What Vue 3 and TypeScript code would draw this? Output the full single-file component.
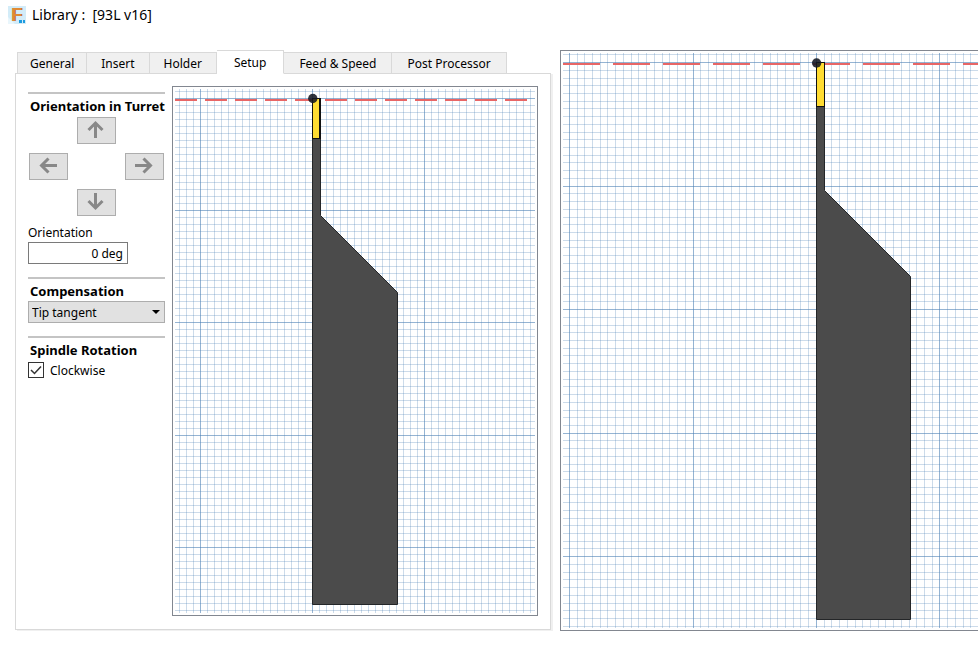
<script setup lang="ts">
import { ref } from 'vue'

interface Line {
  pos: number
  major: boolean
}

interface Drawing {
  name: string
  height: number
  vertical: Line[]
  horizontal: Line[]
  axisY: number
  dash: string
  holder: string
  insert: { x: number; y: number; width: number; height: number; edge: number }
  tip: { x: number; y: number }
}

interface Scale {
  origin: number
  step: number
}

const PER_MAJOR = 16

/* Minor lines sit between the major ones, which keep their own spacing. */
function gridLines(minor: Scale, major: Scale, from: number, to: number): Line[] {
  const lines: Line[] = []
  for (let i = from; i <= to; i++) {
    const isMajor = i % PER_MAJOR === 0
    const at = isMajor
      ? major.origin + (i / PER_MAJOR) * major.step
      : minor.origin + i * minor.step
    lines.push({ pos: Math.floor(at), major: isMajor })
  }
  return lines
}

const setupDrawing: Drawing = {
  name: 'Tool setup preview',
  height: 524,
  vertical: gridLines({ origin: 25.22, step: 7.02 }, { origin: 25.22, step: 112.2 }, -3, 47),
  horizontal: gridLines({ origin: 9.2, step: 7.02 }, { origin: 9.2, step: 112.3 }, -1, 73),
  axisY: 11,
  dash: '22 8',
  holder: 'M137.5 9.5H145.5V126.5L222.5 203.5V515.5H137.5Z',
  insert: { x: 137, y: 9, width: 9, height: 41, edge: 2 },
  tip: { x: 137.8, y: 9.5 },
}

const fullDrawing: Drawing = {
  name: 'Tool preview',
  height: 575,
  vertical: gridLines({ origin: 6.39, step: 7.72 }, { origin: 6.65, step: 123.4 }, 0, 240),
  horizontal: gridLines({ origin: 9.6, step: 7.72 }, { origin: 9.6, step: 123.52 }, -1, 73),
  axisY: 11,
  dash: '37 13',
  holder: 'M253.5 9.5H261.5V137.5L347.5 223.5V566.5H253.5Z',
  insert: { x: 253, y: 9, width: 9, height: 45, edge: 1 },
  tip: { x: 253.6, y: 10 },
}

const tabs = ['General', 'Insert', 'Holder', 'Setup', 'Feed & Speed', 'Post Processor']
const activeTab = ref('Setup')

const directions = [
  { name: 'up', path: 'M8.5 17V2M1.5 9L8.5 2L15.5 9' },
  { name: 'left', path: 'M18 8.5H3M9.5 1.5L2.5 8.5L9.5 15.5' },
  { name: 'right', path: 'M0 8.5H15M8.5 1.5L15.5 8.5L8.5 15.5' },
  { name: 'down', path: 'M8.5 0V15M1.5 8L8.5 15L15.5 8' },
]

const orientation = ref('0 deg')
const compensation = ref('Tip tangent')
const compensations = ['Tip tangent', 'Tip', 'Center']
const clockwise = ref(true)
</script>

<template>
  <div class="window">
    <header class="titlebar">
      <svg class="logo" width="18" height="18" viewBox="0 0 18 18" aria-hidden="true">
        <rect width="18" height="18" fill="#d3ecf8" />
        <path d="M0 18V11L7 18Z" fill="#e9f6fc" />
        <text class="logo-shade" x="4" y="15">F</text>
        <text class="logo-letter" x="3" y="15">F</text>
        <rect x="11" y="14" width="3" height="3" fill="#1c9be0" />
        <rect x="15" y="14" width="2" height="3" fill="#1c9be0" />
      </svg>
      <h1 class="title">Library :&nbsp; [93L v16]</h1>
    </header>

    <main class="content">
      <div class="editor">
        <div class="tabs" role="tablist">
          <button
            v-for="tab in tabs"
            :key="tab"
            type="button"
            role="tab"
            class="tab"
            :class="{ active: tab === activeTab, long: tab.includes(' ') }"
            :aria-selected="tab === activeTab"
            @click="activeTab = tab"
          >{{ tab }}</button>
        </div>

        <div class="panel" role="tabpanel">
          <form class="settings" @submit.prevent>
            <section class="group">
              <h2 class="heading">Orientation in Turret</h2>
              <div class="pad">
                <button
                  v-for="d in directions"
                  :key="d.name"
                  type="button"
                  class="arrow"
                  :class="d.name"
                  :aria-label="d.name"
                >
                  <svg class="arrow-icon" width="17" height="17" viewBox="0 0 17 17" aria-hidden="true">
                    <path :d="d.path" fill="none" stroke="#888" stroke-width="3" />
                  </svg>
                </button>
              </div>
              <label class="label" for="orientation">Orientation</label>
              <input id="orientation" v-model="orientation" class="field" type="text" />
            </section>

            <section class="group">
              <h2 id="compensation-heading" class="heading">Compensation</h2>
              <div class="select-wrap">
                <select v-model="compensation" class="select" aria-labelledby="compensation-heading">
                  <option v-for="c in compensations" :key="c">{{ c }}</option>
                </select>
                <svg class="caret" width="8" height="4" viewBox="0 0 8 4" aria-hidden="true">
                  <path d="M0 0H8L4 4Z" />
                </svg>
              </div>
            </section>

            <section class="group">
              <h2 class="heading">Spindle Rotation</h2>
              <label class="check">
                <input v-model="clockwise" class="box" type="checkbox" />
                <svg v-if="clockwise" class="tick" width="16" height="16" viewBox="0 0 16 16" aria-hidden="true">
                  <path d="M3 8L6.5 11.5L13 4.5" fill="none" stroke="#333" stroke-width="1.5" />
                </svg>
                <span class="check-text">Clockwise</span>
              </label>
            </section>
          </form>

          <figure v-for="g in [setupDrawing]" :key="g.name" class="frame">
            <svg class="drawing" :height="g.height" role="img" :aria-label="g.name">
              <rect v-for="l in g.vertical" :key="'v' + l.pos" :x="l.pos" y="0" width="1" height="100%" class="line" :class="{ major: l.major }" />
              <rect v-for="l in g.horizontal" :key="'h' + l.pos" x="0" :y="l.pos" width="100%" height="1" class="line" :class="{ major: l.major }" />
              <line class="axis" x1="0" :y1="g.axisY" x2="100%" :y2="g.axisY" :stroke-dasharray="g.dash" />
              <path class="holder" :d="g.holder" />
              <rect class="insert-edge" :x="g.insert.x" :y="g.insert.y" :width="g.insert.width" :height="g.insert.height" />
              <rect class="insert" :x="g.insert.x + 1" :y="g.insert.y + 1" :width="g.insert.width - 1 - g.insert.edge" :height="g.insert.height - 2" />
              <circle class="tip" :cx="g.tip.x" :cy="g.tip.y" r="4.7" />
            </svg>
          </figure>
        </div>
      </div>

      <figure v-for="g in [fullDrawing]" :key="g.name" class="frame wide">
        <svg class="drawing" :height="g.height" role="img" :aria-label="g.name">
          <rect v-for="l in g.vertical" :key="'v' + l.pos" :x="l.pos" y="0" width="1" height="100%" class="line" :class="{ major: l.major }" />
          <rect v-for="l in g.horizontal" :key="'h' + l.pos" x="0" :y="l.pos" width="100%" height="1" class="line" :class="{ major: l.major }" />
          <line class="axis" x1="0" :y1="g.axisY" x2="100%" :y2="g.axisY" :stroke-dasharray="g.dash" />
          <path class="holder" :d="g.holder" />
          <rect class="insert-edge" :x="g.insert.x" :y="g.insert.y" :width="g.insert.width" :height="g.insert.height" />
          <rect class="insert" :x="g.insert.x + 1" :y="g.insert.y + 1" :width="g.insert.width - 1 - g.insert.edge" :height="g.insert.height - 2" />
          <circle class="tip" :cx="g.tip.x" :cy="g.tip.y" r="4.7" />
        </svg>
      </figure>
    </main>
  </div>
</template>

<style>
body {
  margin: 0;
  background: #fff;
}
</style>

<style scoped>
.window {
  display: flex;
  flex-direction: column;
  gap: 20px;
  min-height: 100vh;
  box-sizing: border-box;
  overflow: hidden;
  color: #000;
  font: 12px/18px "Noto Sans", "Open Sans", sans-serif;
}

.titlebar {
  display: flex;
  align-items: center;
  gap: 6px;
  height: 30px;
  padding-left: 8px;
  box-sizing: border-box;
}

.logo {
  flex: none;
}

.logo-letter,
.logo-shade {
  font: bold 18px "Liberation Sans", sans-serif;
  fill: #e08a35;
}

.logo-shade {
  fill: #a8642a;
}

.title {
  margin: 0;
  font-size: 14px;
  font-weight: 400;
}

.content {
  display: flex;
  align-items: flex-start;
  gap: 9px;
  padding-left: 15px;
}

.editor {
  flex: none;
}

.tabs {
  display: flex;
  align-items: flex-end;
  height: 24px;
  margin-bottom: -1px;
  padding-left: 2px;
}

.tab {
  height: 22px;
  padding: 2px 14px 0;
  border: 1px solid #d9d9d9;
  border-left-width: 0;
  background: #f0f0f0;
  color: inherit;
  font: inherit;
}

.tab.long {
  padding: 2px 15px 0;
}

.tab:first-child {
  padding: 2px 12px 0;
  border-left-width: 1px;
}

.tab.active {
  position: relative;
  height: 24px;
  padding: 2px 17px 0;
  border-bottom-color: #fff;
  background: #fff;
}

.panel {
  display: flex;
  align-items: flex-start;
  gap: 7px;
  padding: 12px 12px 13px;
  border: 1px solid #d9d9d9;
  box-shadow: 2px 1px 0 #f0f0f0;
}

.settings {
  display: flex;
  flex-direction: column;
  gap: 13px;
  width: 137px;
  padding-top: 6px;
}

.group {
  display: flex;
  flex-direction: column;
  border-top: 2px solid #c4c4c4;
}

.heading {
  margin: 0;
  padding: 3px 0 1px 2px;
  font-size: 13px;
  font-weight: 700;
  white-space: nowrap;
}

.pad {
  display: grid;
  grid-template: repeat(3, 27px) / repeat(3, 39px);
  grid-template-areas: ". up ." "left . right" ". down .";
  gap: 9px;
  padding: 1px 1px 8px;
}

.arrow {
  display: grid;
  place-items: center;
  padding: 0 2px 2px 0;
  border: 1px solid #adadad;
  background: #e1e1e1;
}

.arrow-icon {
  overflow: visible;
}

.up {
  grid-area: up;
}

.left {
  grid-area: left;
}

.right {
  grid-area: right;
}

.down {
  grid-area: down;
}

.field {
  width: 100px;
  height: 22px;
  padding: 0 4px;
  box-sizing: border-box;
  border: 1px solid #7a7a7a;
  background: #fff;
  color: inherit;
  font: inherit;
  text-align: right;
}

.select-wrap {
  position: relative;
  display: flex;
}

.select {
  flex: 1;
  height: 22px;
  padding: 2px 20px 0 3px;
  appearance: none;
  border: 1px solid #adadad;
  border-radius: 0;
  background: #e1e1e1;
  color: inherit;
  font: inherit;
}

.caret {
  position: absolute;
  top: 9px;
  right: 5px;
  pointer-events: none;
}

.check {
  position: relative;
  display: flex;
  align-items: center;
  gap: 6px;
  height: 18px;
  margin-top: 1px;
}

.check-text {
  padding-top: 1px;
}

.box {
  width: 16px;
  height: 16px;
  margin: 0;
  appearance: none;
  border: 1px solid #333;
  background: #fff;
}

.tick {
  position: absolute;
  top: 1px;
  left: 0;
  pointer-events: none;
}

.frame {
  flex: none;
  width: 360px;
  margin: 0;
  padding: 2px;
  border: 1px solid #828790;
}

.frame.wide {
  flex: 1;
  padding-right: 0;
  border-right: 0;
}

.drawing {
  display: block;
  width: 100%;
  overflow: hidden;
}

.line {
  fill: rgba(72, 125, 180, 0.28);
  shape-rendering: crispEdges;
}

.line.major {
  fill: rgba(72, 125, 180, 0.58);
}

.axis {
  stroke: #e86666;
  stroke-width: 2;
}

.holder {
  fill: #4b4b4b;
  stroke: #242628;
}

.insert-edge {
  fill: #111;
}

.insert {
  fill: #ffdc32;
}

.tip {
  fill: rgba(20, 24, 34, 0.88);
}
</style>
